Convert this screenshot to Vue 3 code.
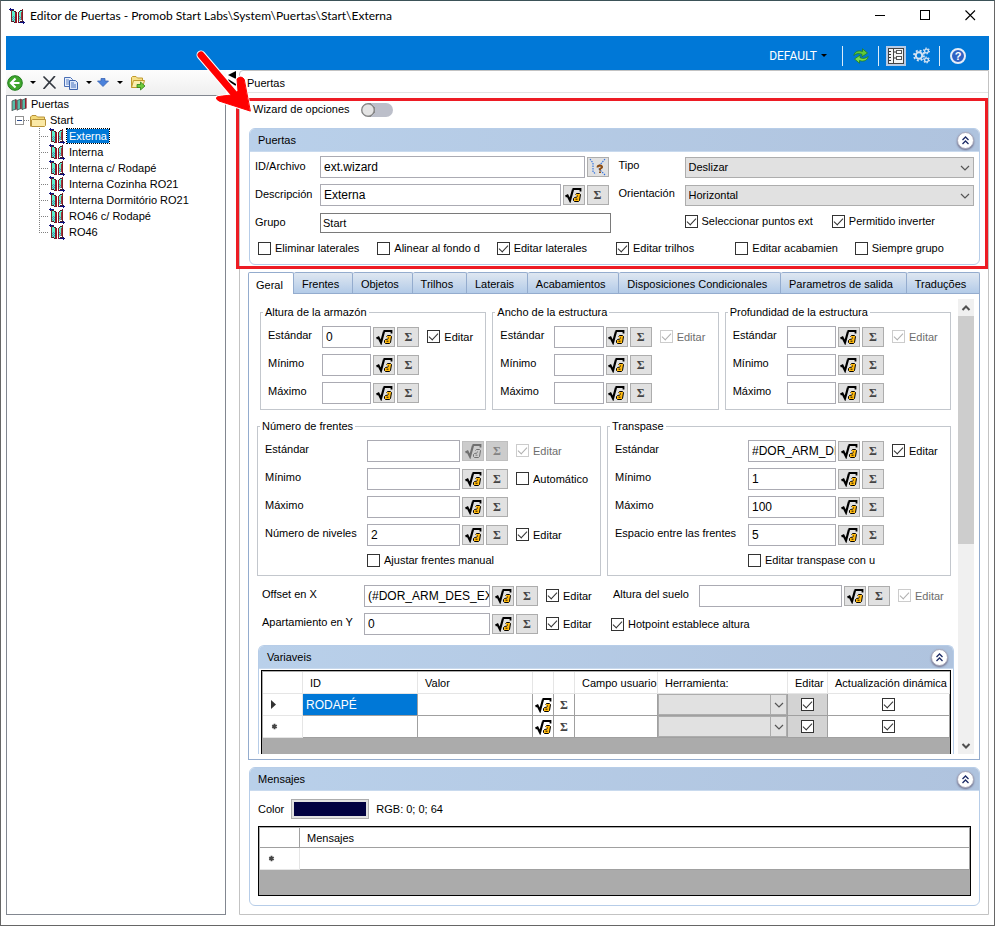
<script setup>
import { ref } from 'vue'

const doors = ['Externa', 'Interna', 'Interna c/ Rodapé', 'Interna Cozinha RO21', 'Interna Dormitório RO21', 'RO46 c/ Rodapé', 'RO46']
const selected = ref('Externa')

const tabs = ['Geral', 'Frentes', 'Objetos', 'Trilhos', 'Laterais', 'Acabamientos', 'Disposiciones Condicionales', 'Parametros de salida', 'Traduções']
const activeTab = ref('Geral')

const options = ref([
  { label: 'Eliminar laterales', on: false },
  { label: 'Alinear al fondo d', on: false },
  { label: 'Editar laterales', on: true },
  { label: 'Editar trilhos', on: true },
  { label: 'Editar acabamien', on: false },
  { label: 'Siempre grupo', on: false },
])

const size = (value, disabled) => [
  { label: 'Estándar', value, check: { label: 'Editar', on: true, disabled } },
  { label: 'Mínimo', value: '' },
  { label: 'Máximo', value: '' },
]

const groups = ref([
  {
    items: [
      { id: 'alt', title: 'Altura de la armazón', kind: 'small', rows: size('0', false) },
      { id: 'anc', title: 'Ancho de la estructura', kind: 'small', rows: size('', true) },
      { id: 'pro', title: 'Profundidad de la estructura', kind: 'small', rows: size('', true) },
    ],
  },
  {
    items: [
      {
        id: 'num', title: 'Número de frentes', kind: 'fronts',
        rows: [
          { label: 'Estándar', value: '', locked: true, check: { label: 'Editar', on: true, disabled: true } },
          { label: 'Mínimo', value: '', check: { label: 'Automático', on: false } },
          { label: 'Máximo', value: '' },
          { label: 'Número de niveles', value: '2', check: { label: 'Editar', on: true } },
        ],
        extra: { label: 'Ajustar frentes manual', on: false },
      },
      {
        id: 'tra', title: 'Transpase', kind: 'overlap',
        rows: [
          { label: 'Estándar', value: '#DOR_ARM_DES_EXT', check: { label: 'Editar', on: true } },
          { label: 'Mínimo', value: '1' },
          { label: 'Máximo', value: '100' },
          { label: 'Espacio entre las frentes', value: '5' },
        ],
        extra: { label: 'Editar transpase con u', on: false },
      },
    ],
  },
])

const offsets = ref([
  { kind: 'offset', label: 'Offset en X', value: '(#DOR_ARM_DES_EXT)', check: { label: 'Editar', on: true } },
  { kind: 'floor', label: 'Altura del suelo', value: '', check: { label: 'Editar', on: true, disabled: true } },
  { kind: 'offset', label: 'Apartamiento en Y', value: '0', check: { label: 'Editar', on: true } },
])
const hotpoint = ref(true)

const variables = ref([
  { id: 'RODAPÉ', edit: true, dyn: true },
  { id: '', edit: true, dyn: true },
])
</script>

<template>
  <div class="window">
    <svg class="defs" aria-hidden="true">
      <symbol id="door" viewBox="0 0 16 16">
        <g shape-rendering="crispEdges">
          <path d="M3 3H5V4H7V14H5V13H3z" fill="#5cf0cf" />
          <path d="M9 4H11V3H13V12H11V13H9z" fill="#5cf0cf" />
          <path d="M3 9h1v1h-1zM4 8h1v1h-1zM5 9h1v1h-1zM4 10h1v1h-1zM3 11h1v1h-1zM5 11h1v1h-1zM4 12h1v1h-1zM10 10h1v1h-1zM11 9h1v1h-1zM12 8h1v1h-1zM10 8h1v1h-1zM12 10h1v1h-1zM11 11h1v1h-1z" fill="#4596b0" />
          <path d="M2 2H3V14H2zM13 1H14V13H13z" fill="#7a2026" />
          <path d="M3 2H5V3H7V4H5V3H3zM3 13H5V14H7V15H5V14H3zM10 3H11V2H13V3H11V4H10zM10 14H11V13H13V12H14V14H12V15H10z" fill="#44202a" />
          <path d="M6 4H8V15H6zM9 4H10V15H9z" fill="#8e1522" />
          <path d="M12 4H13V12H12z" fill="#a8353c" />
          <path d="M0 1H5V2H0zM1 0H2V3H1zM10 14H16V15H10zM14 13H15V16H14z" fill="#10107c" />
        </g>
      </symbol>
      <symbol id="doors" viewBox="0 0 16 16">
        <path d="M1 5L5 3.500V13L1 14.500zM6 4.500L10 3V12.500L6 14zM11 4L14.500 2.500V12L11 13.500z" fill="#56bda9" />
        <path d="M5 3.500V13.500M10 3V13M14.800 2V12.500" stroke="#8c1c28" stroke-width="1.600" fill="none" />
        <path d="M1 5V15M6.200 4.500V14.500M11.200 4V14" stroke="#5f4a4c" stroke-width=".8" fill="none" />
        <path d="M1 5L5 3.500M6 4.500L10 3M11 4L15 2.500M1 14.500L5 13M6 14L10 12.500M11 13.500L15 12" stroke="#3d5c5a" stroke-width=".8" fill="none" />
      </symbol>
      <symbol id="root" viewBox="0 0 17 16">
        <path d="M0.500 9.500L2.500 8.500L5 13.500L8 2.500" stroke="currentColor" stroke-width="2.200" fill="none" />
        <path d="M7.500 2H15.500V4.500" stroke="currentColor" stroke-width="1.800" fill="none" />
        <path d="M10.500 7.500L11.500 6.500H14.500L15.500 7.500L14.500 13.500L13.500 14.500H9.500L8.500 13.500V11.500L9.500 10.500L12 10" stroke="currentColor" stroke-width="1" />
        <path d="M10.500 12.200h2M12.500 8.500v1" stroke="currentColor" stroke-width=".9" fill="none" />
      </symbol>
      <symbol id="chev" viewBox="0 0 10 6"><path d="M1 1L5 5L9 1" stroke="#555" stroke-width="1.200" fill="none" /></symbol>
      <symbol id="up2" viewBox="0 0 9 9"><path d="M1.500 4L4.500 1L7.500 4M1.500 8L4.500 5L7.500 8" stroke="#1d2b66" stroke-width="1.300" fill="none" /></symbol>
      <symbol id="star" viewBox="0 0 7 7"><path d="M3.500 .8V6.200M1.200 2.200L5.800 4.800M5.800 2.200L1.200 4.800" stroke="#444" stroke-width="1.800" /></symbol>
    </svg>

    <header class="titlebar">
      <svg class="i16"><use href="#door" /></svg>
      <h1>Editor de Puertas - Promob Start Labs\System\Puertas\Start\Externa</h1>
      <button class="win" aria-label="Minimizar"><svg width="11" height="11"><path d="M0 5.500H10" stroke="#000" /></svg></button>
      <button class="win" aria-label="Maximizar"><svg width="11" height="11"><rect x=".5" y=".5" width="9" height="9" fill="none" stroke="#000" /></svg></button>
      <button class="win" aria-label="Cerrar"><svg width="11" height="11"><path d="M.5 .5L10 10M10 .5L.5 10" stroke="#000" stroke-width="1.100" /></svg></button>
    </header>

    <div class="ribbon">
      <button class="default">DEFAULT <span class="caret"></span></button>
      <i class="sep"></i>
      <button class="rb refresh" aria-label="Actualizar">
        <svg width="16" height="16" viewBox="0 0 16 16">
          <path d="M.8 7.500C1.500 3.800 5 1.800 9.500 3.500V.8L14.500 5L9 8.800V6.300C6 5.200 3.500 5.300 .8 7.500z" fill="#5fc83c" stroke="#23801a" stroke-width=".8" />
          <path d="M15.200 8.500C14.500 12.200 11 14.200 6.500 12.500V15.200L1.500 11L7 7.200V9.700C10 10.800 12.500 10.700 15.200 8.500z" fill="#79dc4c" stroke="#23801a" stroke-width=".8" />
        </svg>
      </button>
      <i class="sep"></i>
      <button class="rb on" aria-label="Formulario">
        <svg width="16" height="16" viewBox="0 0 16 16">
          <rect x=".5" y=".5" width="15" height="15" fill="#f4f4f4" stroke="#444" />
          <path d="M5.500 1V15" stroke="#444" />
          <path d="M1 3.500h2M1 6.500h2M1 9.500h2M1 12.500h2" stroke="#333" />
          <rect x="8.500" y="2.500" width="5" height="3" fill="#fff" stroke="#555" />
          <rect x="8.500" y="8.500" width="5" height="3" fill="#fff" stroke="#555" />
          <path d="M6 4h2M6 10h2" stroke="#333" />
        </svg>
      </button>
      <button class="rb" aria-label="Configuración">
        <svg width="18" height="17" viewBox="0 0 18 17">
          <g fill="none" stroke="#d5e3f3">
            <circle cx="6" cy="8.500" r="3.200" stroke-width="2" />
            <circle cx="6" cy="8.500" r="5" stroke-width="1.800" stroke-dasharray="2 1.930" />
            <circle cx="13.500" cy="4" r="1.900" stroke-width="1.300" />
            <circle cx="13.500" cy="4" r="2.900" stroke-width="1.200" stroke-dasharray="1.400 1.640" />
            <circle cx="13.500" cy="13" r="1.900" stroke-width="1.300" />
            <circle cx="13.500" cy="13" r="2.900" stroke-width="1.200" stroke-dasharray="1.400 1.640" />
          </g>
        </svg>
      </button>
      <i class="sep"></i>
      <button class="rb" aria-label="Ayuda"><span class="help">?</span></button>
    </div>

    <div class="work">
      <aside class="side">
        <div class="toolbar">
          <button class="tb" aria-label="Nuevo">
            <svg width="16" height="16" viewBox="0 0 16 16">
              <circle cx="8" cy="8" r="7.300" fill="#3fa62c" stroke="#1f7d1c" />
              <path d="M8.500 3.500L4 8L8.500 12.500M4.500 8H12.500" stroke="#fff" stroke-width="2.200" fill="none" />
            </svg><span class="caret"></span>
          </button>
          <button class="tb x" aria-label="Eliminar">
            <svg width="13" height="13" viewBox="0 0 13 13"><path d="M1 1L12 12M11.500 .5L1 12.500" stroke="#333840" stroke-width="1.700" stroke-linecap="round" /></svg>
          </button>
          <button class="tb" aria-label="Copiar">
            <svg width="16" height="16" viewBox="0 0 16 16">
              <path d="M1.500 2.500H7.500L9.500 4.500V11.500H1.500z" fill="#e8effb" stroke="#4a6fb5" />
              <path d="M3 5h3M3 7h3M3 9h3" stroke="#5a82c8" />
              <path d="M6.500 5.500H12.500L14.500 7.500V14.500H6.500z" fill="#dbe6f8" stroke="#3d63ad" />
              <path d="M8 8h3M8 10h5M8 12h5" stroke="#4a74c0" />
            </svg><span class="caret"></span>
          </button>
          <button class="tb down" aria-label="Mover abajo">
            <svg width="12" height="9" viewBox="0 0 12 9"><path d="M4 .5H8V3H11.500L6 8.500L.5 3H4z" fill="#4b82dc" stroke="#3a64b4" stroke-width=".8" /></svg><span class="caret"></span>
          </button>
          <button class="tb" aria-label="Exportar">
            <svg width="16" height="16" viewBox="0 0 16 16">
              <path d="M1.500 12.500V2.500L2.500 1.500H6L7.500 3H12.500V6" fill="#f6e08a" stroke="#c09a2c" />
              <path d="M1.500 12.500L3.500 5.500H14.500L12.500 12.500z" fill="#fbeeae" stroke="#c09a2c" />
              <path d="M7 9.500H10.500V7L15 11L10.500 15V12.500H7z" fill="#6ecb3c" stroke="#2f7f1d" stroke-width=".8" />
            </svg>
          </button>
        </div>
        <nav class="tree" aria-label="Puertas">
          <div class="node root"><svg class="i16"><use href="#doors" /></svg><span class="txt">Puertas</span></div>
          <div class="node group">
            <button class="expander" aria-label="Contraer"></button><i class="dots"></i>
            <svg class="i16" viewBox="0 0 16 16">
              <path d="M.5 14.500V5L2 3.500H6L7.500 5H14.500V8" fill="#f3d978" stroke="#b8923a" />
              <path d="M1.500 14.500V8L2.500 7.500H15.500V13.500L14.500 14.500z" fill="#fbe9a6" stroke="#b8923a" />
            </svg><span class="txt">Start</span>
          </div>
          <ul>
            <li v-for="d in doors" :key="d" class="node leaf">
              <i class="branch"></i>
              <svg class="i16"><use href="#door" /></svg>
              <button class="txt" :class="{ sel: d === selected }" @click="selected = d">{{ d }}</button>
            </li>
          </ul>
        </nav>
      </aside>

      <div class="splitter">
        <svg width="13" height="20" viewBox="0 0 13 20"><path d="M10 1V9L2 5z" fill="#000" /><path d="M2 10L10 15" stroke="#000" stroke-width="2" /></svg>
        <svg class="arrow" width="58" height="66" viewBox="0 0 58 66" aria-hidden="true">
          <g stroke="#fff" fill="#fff" stroke-linecap="round" stroke-linejoin="round">
            <path d="M5 6L45 53" stroke-width="9" />
            <path d="M54 62L23 52Q19 50 21 48Q24 47 37 46L42 42L41 30Q45 26 48 30z" stroke-width="3" />
          </g>
          <g stroke="#f00" fill="#f00" stroke-linecap="round" stroke-linejoin="round">
            <path d="M5 6L45 53" stroke-width="7" />
            <path d="M54 62L23 52Q19 50 21 48Q24 47 37 46L42 42L41 30Q45 26 48 30z" stroke-width="1" />
          </g>
        </svg>
      </div>

      <main class="pane">
        <h2 class="panehead">Puertas</h2>

        <section class="wizard">
          <div class="wizrow">
            <label for="wiz">Wizard de opciones</label>
            <input id="wiz" type="checkbox" role="switch" class="toggle">
          </div>
          <div class="card">
            <div class="cardhead"><h3>Puertas</h3><button class="collapse" aria-label="Contraer Puertas"><svg width="9" height="9"><use href="#up2" /></svg></button></div>
            <div class="ident">
              <div class="cols">
                <div class="stack">
                  <div class="line">
                    <label for="file">ID/Archivo</label><input id="file" type="text" value="ext.wizard">
                    <button class="sq" aria-label="Buscar archivo">
                      <svg width="18" height="18" viewBox="0 0 18 18">
                        <path d="M1 1L4 5V14L7 16M16 1L10 8M16 17L9 10" fill="none" stroke="#2a6fe0" stroke-width="1.100" stroke-dasharray="1.500 1" />
                        <path d="M8.500 9.500Q8.500 7.500 11 7.500Q13.500 7.800 13 9.500L11 11V12.500M11 13.500V15" fill="none" stroke="#8a4a10" stroke-width="1.900" />
                      </svg>
                    </button>
                  </div>
                  <div class="line">
                    <label for="desc">Descripción</label><input id="desc" type="text" value="Externa">
                    <button class="sq" aria-label="Fórmula"><svg class="fx"><use href="#root" /></svg></button>
                    <button class="sq sigma" aria-label="Suma">Σ</button>
                  </div>
                  <div class="line"><label for="grp">Grupo</label><input id="grp" class="dark" type="text" value="Start"></div>
                </div>
                <div class="stack">
                  <div class="line">
                    <label for="tipo">Tipo</label>
                    <span class="combo"><select id="tipo"><option>Deslizar</option></select><svg><use href="#chev" /></svg></span>
                  </div>
                  <div class="line">
                    <label for="ori">Orientación</label>
                    <span class="combo"><select id="ori"><option>Horizontal</option></select><svg><use href="#chev" /></svg></span>
                  </div>
                  <div class="line pair">
                    <label class="chk"><input type="checkbox" checked>Seleccionar puntos ext</label>
                    <label class="chk"><input type="checkbox" checked>Permitido inverter</label>
                  </div>
                </div>
              </div>
              <div class="opts">
                <label v-for="o in options" :key="o.label" class="chk"><input v-model="o.on" type="checkbox">{{ o.label }}</label>
              </div>
            </div>
          </div>
          <div class="highlight" aria-hidden="true"></div>
        </section>

        <div class="tabs" role="tablist">
          <button v-for="t in tabs" :key="t" role="tab" :class="{ active: t === activeTab }" @click="activeTab = t">{{ t }}</button>
        </div>

        <section class="panel">
          <div class="content">
            <div v-for="(g, gi) in groups" :key="gi" class="groups" :class="'g' + gi">
              <fieldset v-for="f in g.items" :key="f.id" :class="f.kind">
                <legend>{{ f.title }}</legend>
                <div v-for="(r, i) in f.rows" :key="i" class="field">
                  <label :for="f.id + i">{{ r.label }}</label>
                  <input :id="f.id + i" v-model="r.value" type="text">
                  <button class="sq" :disabled="r.locked" aria-label="Fórmula"><svg class="fx"><use href="#root" /></svg></button>
                  <button class="sq sigma" :disabled="r.locked" aria-label="Suma">Σ</button>
                  <label v-if="r.check" class="chk" :class="{ off: r.check.disabled }"><input v-model="r.check.on" type="checkbox" :disabled="r.check.disabled">{{ r.check.label }}</label>
                </div>
                <div v-if="f.extra" class="field extra">
                  <label class="chk"><input v-model="f.extra.on" type="checkbox">{{ f.extra.label }}</label>
                </div>
              </fieldset>
            </div>

            <div class="offsets">
              <div v-for="(r, i) in offsets" :key="i" class="field" :class="r.kind">
                <label :for="'off' + i">{{ r.label }}</label>
                <input :id="'off' + i" v-model="r.value" type="text">
                <button class="sq" aria-label="Fórmula"><svg class="fx"><use href="#root" /></svg></button>
                <button class="sq sigma" aria-label="Suma">Σ</button>
                <label class="chk" :class="{ off: r.check.disabled }"><input v-model="r.check.on" type="checkbox" :disabled="r.check.disabled">{{ r.check.label }}</label>
              </div>
              <label class="chk"><input v-model="hotpoint" type="checkbox">Hotpoint establece altura</label>
            </div>

            <div class="card vars">
              <div class="cardhead"><h3>Variaveis</h3><button class="collapse" aria-label="Contraer Variaveis"><svg width="9" height="9"><use href="#up2" /></svg></button></div>
              <div class="sheet">
                <table>
                  <colgroup>
                    <col class="c-head"><col><col><col class="c-icon"><col class="c-icon"><col class="c-user"><col class="c-tool"><col class="c-edit"><col class="c-dyn">
                  </colgroup>
                  <thead>
                    <tr><th></th><th>ID</th><th>Valor</th><th></th><th></th><th>Campo usuario</th><th>Herramienta:</th><th>Editar</th><th>Actualización dinámica</th></tr>
                  </thead>
                  <tbody>
                    <tr v-for="(v, i) in variables" :key="i">
                      <td class="rowhead">
                        <svg v-if="i === 0" width="6" height="9"><path d="M0 0L5 4.500L0 9z" fill="#333" /></svg>
                        <svg v-else width="7" height="7"><use href="#star" /></svg>
                      </td>
                      <td :class="{ picked: i === 0 }">{{ v.id }}</td>
                      <td></td>
                      <td class="mid"><svg class="fx"><use href="#root" /></svg></td>
                      <td class="mid sigma">Σ</td>
                      <td></td>
                      <td class="tool"><span class="combo small"><select aria-label="Herramienta" disabled><option></option></select><svg><use href="#chev" /></svg></span></td>
                      <td class="mid grey"><input v-model="v.edit" type="checkbox" aria-label="Editar"></td>
                      <td class="mid"><input v-model="v.dyn" type="checkbox" aria-label="Actualización dinámica"></td>
                    </tr>
                  </tbody>
                </table>
              </div>
            </div>
          </div>
          <div class="scroll">
            <button aria-label="Subir"><svg width="10" height="6" viewBox="0 0 10 6"><path d="M1.500 5L5 1.500L8.500 5" stroke="#505050" stroke-width="2" fill="none" /></svg></button>
            <div class="thumb"></div>
            <button aria-label="Bajar"><svg width="10" height="6" viewBox="0 0 10 6"><path d="M1.500 1L5 4.500L8.500 1" stroke="#505050" stroke-width="2" fill="none" /></svg></button>
          </div>
        </section>

        <section class="card messages">
          <div class="cardhead"><h3>Mensajes</h3><button class="collapse" aria-label="Contraer Mensajes"><svg width="9" height="9"><use href="#up2" /></svg></button></div>
          <div class="msgbody">
            <div class="color"><label for="color">Color</label><button id="color" class="swatch" aria-label="Color"><span></span></button><span>RGB: 0; 0; 64</span></div>
            <div class="sheet">
              <table>
                <colgroup><col class="c-head"><col></colgroup>
                <thead><tr><th></th><th>Mensajes</th></tr></thead>
                <tbody><tr><td class="rowhead"><svg width="7" height="7"><use href="#star" /></svg></td><td></td></tr></tbody>
              </table>
            </div>
          </div>
        </section>
      </main>
    </div>
  </div>
</template>

<style>
body { background: #fff; }
</style>

<style scoped>
* { box-sizing: border-box; }
.window {
  margin-right: 5px;
  min-width: 900px;
  border: 1px solid #666;
  border-top-color: #3b5258;
  background: #fff;
  padding: 0 5px 10px;
  font: 11px/14px "Liberation Sans", Arial, sans-serif;
  color: #000;
}
.defs { display: block; width: 0; height: 0; }
button, input, select { font: inherit; color: inherit; margin: 0; border-radius: 0; outline: none; }
button { background: none; border: 0; padding: 0; display: flex; align-items: center; justify-content: center; }
h1, h2, h3 { margin: 0; font: inherit; }
svg { display: block; flex: none; }
.i16 { width: 16px; height: 16px; }
.caret { border: 3px solid transparent; border-top-color: #000; border-bottom: 0; }

.titlebar { display: flex; align-items: center; height: 35px; margin-right: -4px; padding: 0 0 6px 3px; }
.titlebar h1 { flex: 1; margin-left: 5px; font: 12px/16px Lato, "Open Sans", sans-serif; white-space: nowrap; }
.win { width: 45px; height: 28px; }

.ribbon { display: flex; align-items: center; justify-content: flex-end; height: 34px; background: #0078d7; padding: 5px 21px 0 0; }
.default { color: #fff; font: 12px/16px Roboto, "Open Sans", sans-serif; gap: 4px; }
.sep { width: 1px; height: 20px; background: #dcecfa; margin-left: 7px; }
.default + .sep { margin-left: 15px; }
.rb { width: 20px; height: 20px; margin-left: 8px; }
.rb.on { background: #b9cbe4; margin-left: 7px; }
.rb.on + .rb { margin-left: 6px; }
.help {
  width: 16px; height: 16px; border-radius: 50%; border: 2px solid #e6edf8; background: #2f62c4;
  color: #fff; font: bold 11px/12px "Liberation Sans", Arial, sans-serif; text-align: center;
}

.work { display: grid; grid-template-columns: 220px 13px minmax(0, 1fr); }
.side { display: flex; flex-direction: column; }
.toolbar { display: flex; align-items: center; height: 25px; padding: 0 1px; background: linear-gradient(#fdfdfd, #efefef); }
.tb { gap: 7px; margin-right: 9px; }
.tb.x { margin: 0 7px 0 -2px; }
.tb.down { margin: 0 7px 0 -4px; gap: 8px; }
.tree { flex: 1; border: 1px solid #828790; background: #fff; }
.tree ul { list-style: none; margin: 0; padding: 0; }
.node { display: flex; align-items: center; height: 16px; white-space: nowrap; }
.root { padding-left: 4px; }
.group { padding-left: 8px; }
.leaf { padding-left: 32px; }
.txt { line-height: 14px; padding: 0 2px; margin-left: 2px; }
.sel { background: #0078d7; color: #fff; outline: 1px dotted #000; }
.expander {
  width: 9px; height: 9px; border: 1px solid #919191;
  background: linear-gradient(#2b4a8c, #2b4a8c) center / 5px 1px no-repeat #fff;
}
.dots { width: 6px; height: 1px; background: repeating-linear-gradient(90deg, #808080 0 1px, transparent 1px 2px); }
.branch {
  width: 10px; height: 16px;
  background:
    repeating-linear-gradient(90deg, #808080 0 1px, transparent 1px 2px) 0 8px / 100% 1px no-repeat,
    repeating-linear-gradient(#808080 0 1px, transparent 1px 2px) 0 0 / 1px 100% no-repeat;
}
.leaf:last-child .branch { background-size: 100% 1px, 1px 8px; }

.splitter { position: relative; z-index: 3; }
.arrow { position: absolute; left: -30px; top: -21px; }

.pane { border: 1px solid #c3c3c3; border-radius: 4px 0 0 0; padding-bottom: 8px; }
.panehead { height: 22px; padding: 5px 0 0 7px; border-bottom: 1px solid #e3e3e3; line-height: 15px; }
.wizard { position: relative; }
.highlight { position: absolute; top: 5px; right: 0; bottom: -4px; left: -4px; border: 3px solid #ed1c24; pointer-events: none; }
.wizrow { display: flex; align-items: center; gap: 11px; height: 35px; padding: 0 0 1px 13px; }
.wizrow label { padding-bottom: 2px; }
.toggle {
  appearance: none; width: 32px; height: 14px; border-radius: 7px;
  background: radial-gradient(circle at 7px 7px, #e4e4e4 0 5px, #888 6px, #888 7px, #bcbfca 7px);
}

.card { margin: 0 8px 0 9px; border: 1px solid #b7cde8; border-radius: 6px; }
.cardhead {
  display: flex; align-items: center; justify-content: space-between; height: 23px; padding: 0 5px 0 8px;
  background: linear-gradient(90deg, #b9d0ea, #afc3de); border-bottom: 1px solid #c9daee; border-radius: 5px 5px 0 0;
}
.collapse { width: 17px; height: 17px; border-radius: 50%; background: #fff; border: 1px solid #a9a9bb; box-shadow: 0 1px 2px #6d6d88; }

.ident { padding: 4px 5px 7px; }
.cols { display: grid; grid-template-columns: 1fr 1fr; column-gap: 8px; }
.stack { display: grid; row-gap: 6px; }
.line { display: flex; align-items: center; height: 22px; }
.line > label:first-child:not(.chk) { width: 65px; flex: none; padding-bottom: 2px; }
.line > .sq { margin-left: 2px; }
.stack:last-child .line > label:first-child:not(.chk) { width: 66px; padding-bottom: 4px; }
.line > input[type=text] { flex: 1; }
.line:nth-child(-n+2) > .sq:last-child { margin-right: 2px; }
.pair { padding: 0 0 4px 66px; gap: 19px; }
.opts { display: grid; grid-template-columns: repeat(6, 1fr); height: 18px; margin: 5px 0 0 3px; align-items: center; }

input[type=text] { min-width: 0; width: 100%; height: 22px; border: 1px solid #ababb3; padding: 0 0 0 3px; background: #fff; font-size: 12px; }
input.dark[type=text] { height: 20px; border-color: #7a7a7a; padding-left: 2px; font-size: 11px; }
.sq { flex: none; width: 22px; height: 20px; background: #e1e1e1; border: 1px solid #adadad; }
.fx { width: 17px; height: 16px; color: #000; fill: #ffb90f; }
.sigma { font: bold 12px/14px "Liberation Serif", serif; color: #444; }
.sq:disabled { background: #ccc; border-color: #bfbfbf; color: #838383; }
.sq:disabled .fx { color: #707070; fill: #ccc; }

.chk { display: flex; align-items: center; gap: 4px; white-space: nowrap; }
input[type=checkbox]:not(.toggle) {
  appearance: none; flex: none; width: 13px; height: 13px; border: 1px solid #333; background: #fff; display: grid; place-items: center;
}
input[type=checkbox]:not(.toggle):checked::before {
  content: ""; width: 8px; height: 4px; border: solid #333; border-width: 0 0 1px 1px; transform: translateY(-1px) rotate(-47deg);
}
.off { color: #6d6d6d; }
.off input[type=checkbox]:not(.toggle) { border-color: #ccc; }
.off input[type=checkbox]:not(.toggle):checked::before { border-color: #b0b0b0; }

.combo { position: relative; display: block; flex: 1; min-width: 0; }
.combo select { appearance: none; display: block; width: 100%; height: 21px; border: 1px solid #adadad; background: #e1e1e1; padding: 0 20px 0 3px; }
.combo svg { position: absolute; right: 4px; top: 8px; width: 10px; height: 6px; pointer-events: none; }

.tabs { display: flex; margin: 7px 8px 0; }
.tabs button {
  flex: 1 0 auto; justify-content: flex-start; height: 21px; padding: 2px 8px 0 8px; white-space: nowrap;
  background: linear-gradient(#dfe7f1, #b3cbe8); border: 1px solid #94acce; border-width: 1px 1px 0 0; border-radius: 2px 2px 0 0;
}
.tabs button.active { flex: 0 0 auto; background: #fff; border-left-width: 1px; margin-bottom: -1px; z-index: 1; height: 22px; padding: 2px 10px 0 7px; }
.panel { display: flex; margin: 0 8px; border: 1px solid #94acce; padding: 5px 5px 5px 0; }
.content { flex: 1; min-width: 0; padding-top: 6px; }
.scroll { display: flex; flex-direction: column; width: 16px; background: #f0f0f0; }
.scroll button { height: 17px; }
.thumb { height: 50%; background: #cdcdcd; }
.scroll button:last-child { margin-top: auto; }

.groups { display: grid; margin: 0 7px 9px 8px; }
.g0 { grid-template-columns: repeat(3, 1fr); gap: 6px; padding-left: 3px; }
.g1 { grid-template-columns: 1fr 1fr; gap: 6px; }
fieldset { min-width: 0; margin: 0; border: 1px solid #c3c7cd; padding: 7px 0 5px 7px; display: grid; row-gap: 6px; }
legend { padding: 0 2px; margin-left: -5px; line-height: 14px; }
.field { display: grid; grid-template-columns: var(--label) minmax(0, 1fr) 22px 22px var(--check); column-gap: 2px; align-items: center; }
.field > label:first-child:not(.chk) { padding-bottom: 4px; white-space: nowrap; }
.field .chk { padding-left: 6px; padding-bottom: 1px; }
.small { --label: 52px; --check: 64px; }
.fronts { --label: 100px; --check: 90px; }
.overlap { --label: 131px; --check: 64px; }
.extra { height: 18px; }
.field.extra .chk { grid-column: 2 / -1; padding-left: 0; padding-bottom: 2px; }
.offsets { display: grid; grid-template-columns: 1fr 1fr; gap: 6px 9px; margin: 0 7px 0 13px; align-items: center; }
.offset { --label: 100px; --check: 62px; }
.floor { --label: 86px; --check: 59px; }
.floor > label:first-child:not(.chk) { padding-left: 2px; }

.vars { margin: 10px 4px 0 9px; border-bottom: 0; border-radius: 6px 6px 0 0; }
.vars .sheet { margin: 1px 2px 0; border-bottom: 0; padding-bottom: 16px; }
.sheet { border: 1px solid #000; background: #ababab; padding: 1px 0 0 1px; }
table { width: 100%; border-collapse: separate; border-spacing: 0; table-layout: fixed; background: #fff; }
th, td { height: 22px; padding: 0; border: solid #a0a0a0; border-width: 0 1px 1px 0; }
th { border-color: #e5e5e5; font-weight: normal; text-align: left; padding-left: 7px; white-space: nowrap; }
td { padding-left: 3px; }
.c-head { width: 40px; }
.c-icon { width: 21px; }
.c-user { width: 83px; }
.c-tool { width: 130px; }
.c-edit { width: 40px; }
.c-dyn { width: 122px; }
.rowhead { border-color: #e5e5e5; padding-left: 8px; }
.picked { background: #0078d7; color: #fff; font-size: 12px; }
.mid { padding: 0; text-align: center; }
.mid > svg, .mid > input[type=checkbox]:not(.toggle) { margin: 0 auto; }
.grey { background: #d3d3d3; }
.tool { padding: 0; }
.combo.small select { opacity: 1; background: linear-gradient(#adadad, #adadad) right 15px top / 1px 100% no-repeat #e1e1e1; padding: 0; }
.combo.small svg { right: 3px; }

.messages { margin-top: 7px; }
.msgbody { padding: 8px 8px 9px; }
.color { display: flex; align-items: center; gap: 7px; margin-bottom: 7px; }
.swatch { width: 78px; height: 20px; padding: 2px; background: #e1e1e1; border: 1px solid #adadad; }
.swatch span { width: 100%; height: 100%; background: #000040; }
.messages .sheet { padding-bottom: 25px; }
.messages th { height: 20px; border-color: #a0a0a0; }
</style>
